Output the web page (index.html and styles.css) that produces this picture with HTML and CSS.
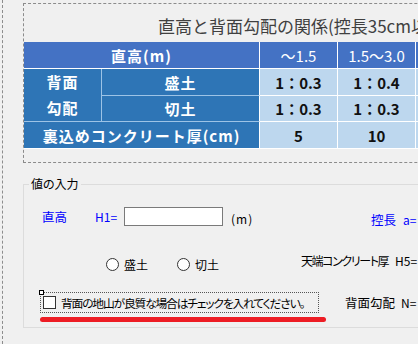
FILE: index.html
```html
<!DOCTYPE html>
<html>
<head>
  <title>値の入力</title>
  <link rel="stylesheet" href="styles.css">
</head>
<body>
  <div class="frame">
    <div class="panel">
      <div class="panel-title">直高と背面勾配の関係(控長35cm以上)</div>
      <table class="slope-table">
        <colgroup>
          <col class="col-a">
          <col class="col-b">
          <col class="col-v">
          <col class="col-v">
          <col class="col-v">
        </colgroup>
        <tr class="row-head">
          <th colspan="2" class="head-main">直高(m)</th>
          <th class="head-num">～1.5</th>
          <th class="head-num">1.5～3.0</th>
          <th class="head-num">3.0～</th>
        </tr>
        <tr class="row-fill">
          <td rowspan="2" class="lab lab-group">背面<br>勾配</td>
          <td class="lab lab-split">盛土</td>
          <td class="val">1：0.3</td>
          <td class="val">1：0.4</td>
          <td class="val">1：0.5</td>
        </tr>
        <tr class="row-cut">
          <td class="lab lab-split">切土</td>
          <td class="val">1：0.3</td>
          <td class="val">1：0.3</td>
          <td class="val">1：0.3</td>
        </tr>
        <tr class="row-thick">
          <td colspan="2" class="lab lab-wide">裏込めコンクリート厚(cm)</td>
          <td class="val">5</td>
          <td class="val">10</td>
          <td class="val">15</td>
        </tr>
      </table>
    </div>

    <fieldset class="input-group">
      <legend>値の入力</legend>

      <div class="field-row row-height">
        <span class="blue lbl-height">直高</span>
        <span class="blue lbl-h1">H1=</span>
        <input type="text" class="text-box">
        <span class="lbl-unit">(m)</span>
        <span class="blue lbl-len">控長</span>
        <span class="blue lbl-a">a=</span>
      </div>

      <div class="field-row row-soil">
        <span class="radio"></span>
        <span class="lbl-fill">盛土</span>
        <span class="radio"></span>
        <span class="lbl-cut">切土</span>
        <span class="lbl-top">天端コンクリート厚</span>
        <span class="lbl-h5">H5=</span>
      </div>

      <div class="field-row row-check">
        <div class="check-wrap">
          <div class="check-box">
            <span class="grip"></span>
            <span class="check"></span>
            <span class="check-text">背面の地山が良質な場合はチェックを入れてください。</span>
          </div>
          <div class="red-line"></div>
        </div>
        <span class="lbl-slope">背面勾配</span>
        <span class="lbl-n">N=</span>
      </div>
    </fieldset>
  </div>
</body>
</html>
```

FILE: styles.css
```css
html, body {
  margin: 0;
  padding: 0;
  overflow: hidden;
}

body {
  width: 418px;
  height: 344px;
  padding-left: 2px;
  box-sizing: border-box;
  background-color: #f0f0f0;
  font-family: "Noto Sans CJK JP", sans-serif;
  color: #000;
}

.frame {
  height: 344px;
  border-left: 1px dashed #8c8c8c;
  padding: 3px 0 0 20px;
  box-sizing: border-box;
  overflow: hidden;
}

/* table panel */
.panel {
  width: 600px;
  height: 160px;
  border: 1px dashed #8c8c8c;
  box-sizing: border-box;
}

.panel-title {
  height: 38px;
  padding: 9px 0 0 134px;
  box-sizing: border-box;
  font-size: 17px;
  line-height: 25px;
  color: #404040;
  white-space: nowrap;
}

.slope-table {
  table-layout: fixed;
  width: 470px;
  border-collapse: separate;
  border-spacing: 0;
}

.col-a { width: 78px; }
.col-b { width: 158px; }
.col-v { width: 78px; }

.slope-table th,
.slope-table td {
  box-sizing: border-box;
  padding: 0;
  text-align: center;
  white-space: nowrap;
  border-right: 1px solid #fff;
  border-bottom: 1px solid #fff;
  font-size: 15px;
}

.row-head th {
  height: 27px;
  background-color: #4472c4;
  color: #fff;
}

.head-main {
  font-weight: bold;
  letter-spacing: 1px;
}

.head-num {
  font-weight: normal;
  font-size: 16px;
}

.row-fill td { height: 27px; }
.row-cut td { height: 26px; }
.row-thick td { height: 27px; }

.lab {
  background-color: #2e75b6;
  color: #fff;
  font-weight: bold;
  letter-spacing: 1px;
}

.lab-group {
  line-height: 26px;
  border-right-color: #9dc3e6 !important;
  border-bottom-color: #9dc3e6 !important;
}

.lab-split {
  border-bottom-color: #9dc3e6 !important;
}

.val {
  background-color: #bdd7ee;
  font-weight: bold;
  font-size: 16px;
  color: #111;
}

/* input group */
.input-group {
  width: 600px;
  margin: 13px 0 0 0;
  padding: 15px 0 5px 5px;
  border: 1px solid #dcdcdc;
  box-sizing: border-box;
  min-width: 0;
  font-size: 12px;
  font-feature-settings: "palt";
}

.input-group legend {
  padding: 0 2px;
  line-height: 16px;
  font-size: 12px;
}

.field-row {
  display: flex;
  align-items: center;
  white-space: nowrap;
}

.field-row > * {
  flex-shrink: 0;
}

.blue {
  color: #0000ff;
}

.row-height {
  height: 19px;
}

.lbl-height {
  margin-left: 13px;
  width: 53px;
  font-size: 12.5px;
}

.lbl-h1 {
  width: 29px;
}

.text-box {
  width: 99px;
  height: 19px;
  margin: 0;
  padding: 0;
  border: 1px solid #7a7a7a;
  background: #fff;
  box-sizing: border-box;
}

.lbl-unit {
  margin-left: 8px;
  width: 140px;
  letter-spacing: 1px;
  padding-top: 4px;
}

.lbl-len {
  width: 32px;
  font-size: 12.5px;
  padding-top: 6px;
}

.lbl-a {
  padding-top: 6px;
}

.row-soil {
  height: 19px;
  margin-top: 29px;
}

.radio {
  width: 13px;
  height: 13px;
  border: 1px solid #333;
  border-radius: 50%;
  background: #fff;
  box-sizing: border-box;
}

.radio:first-child {
  margin-left: 77px;
}

.lbl-fill {
  margin-left: 5px;
  width: 53px;
}

.lbl-cut {
  margin-left: 5px;
  width: 106px;
}

.lbl-top {
  width: 94px;
  margin-bottom: 9px;
  letter-spacing: -1.4px;
}

.lbl-h5 {
  margin-bottom: 9px;
}

.row-check {
  align-items: flex-start;
  margin-top: 18px;
}

.check-wrap {
  margin-left: 11px;
  width: 286px;
}

.check-box {
  position: relative;
  display: flex;
  align-items: center;
  width: 279px;
  height: 21px;
  border: 1px dotted #555;
  box-sizing: border-box;
}

.check-box > * {
  flex-shrink: 0;
}

.grip {
  position: absolute;
  left: -2px;
  top: -3px;
  width: 5px;
  height: 5px;
  border: 1px solid #000;
  background: #fff;
  box-sizing: border-box;
}

.check {
  width: 13px;
  height: 13px;
  margin-left: 2px;
  border: 1px solid #333;
  background: #fff;
  box-sizing: border-box;
}

.check-text {
  margin-left: 5px;
  font-size: 11.8px;
  letter-spacing: -1.2px;
}

.red-line {
  height: 5px;
  margin-top: 4px;
  border-radius: 3px;
  background-color: #ed1c24;
}

.lbl-slope {
  margin-left: 19px;
  width: 56px;
  line-height: 21px;
  font-size: 12.5px;
}

.lbl-n {
  line-height: 21px;
}
```
